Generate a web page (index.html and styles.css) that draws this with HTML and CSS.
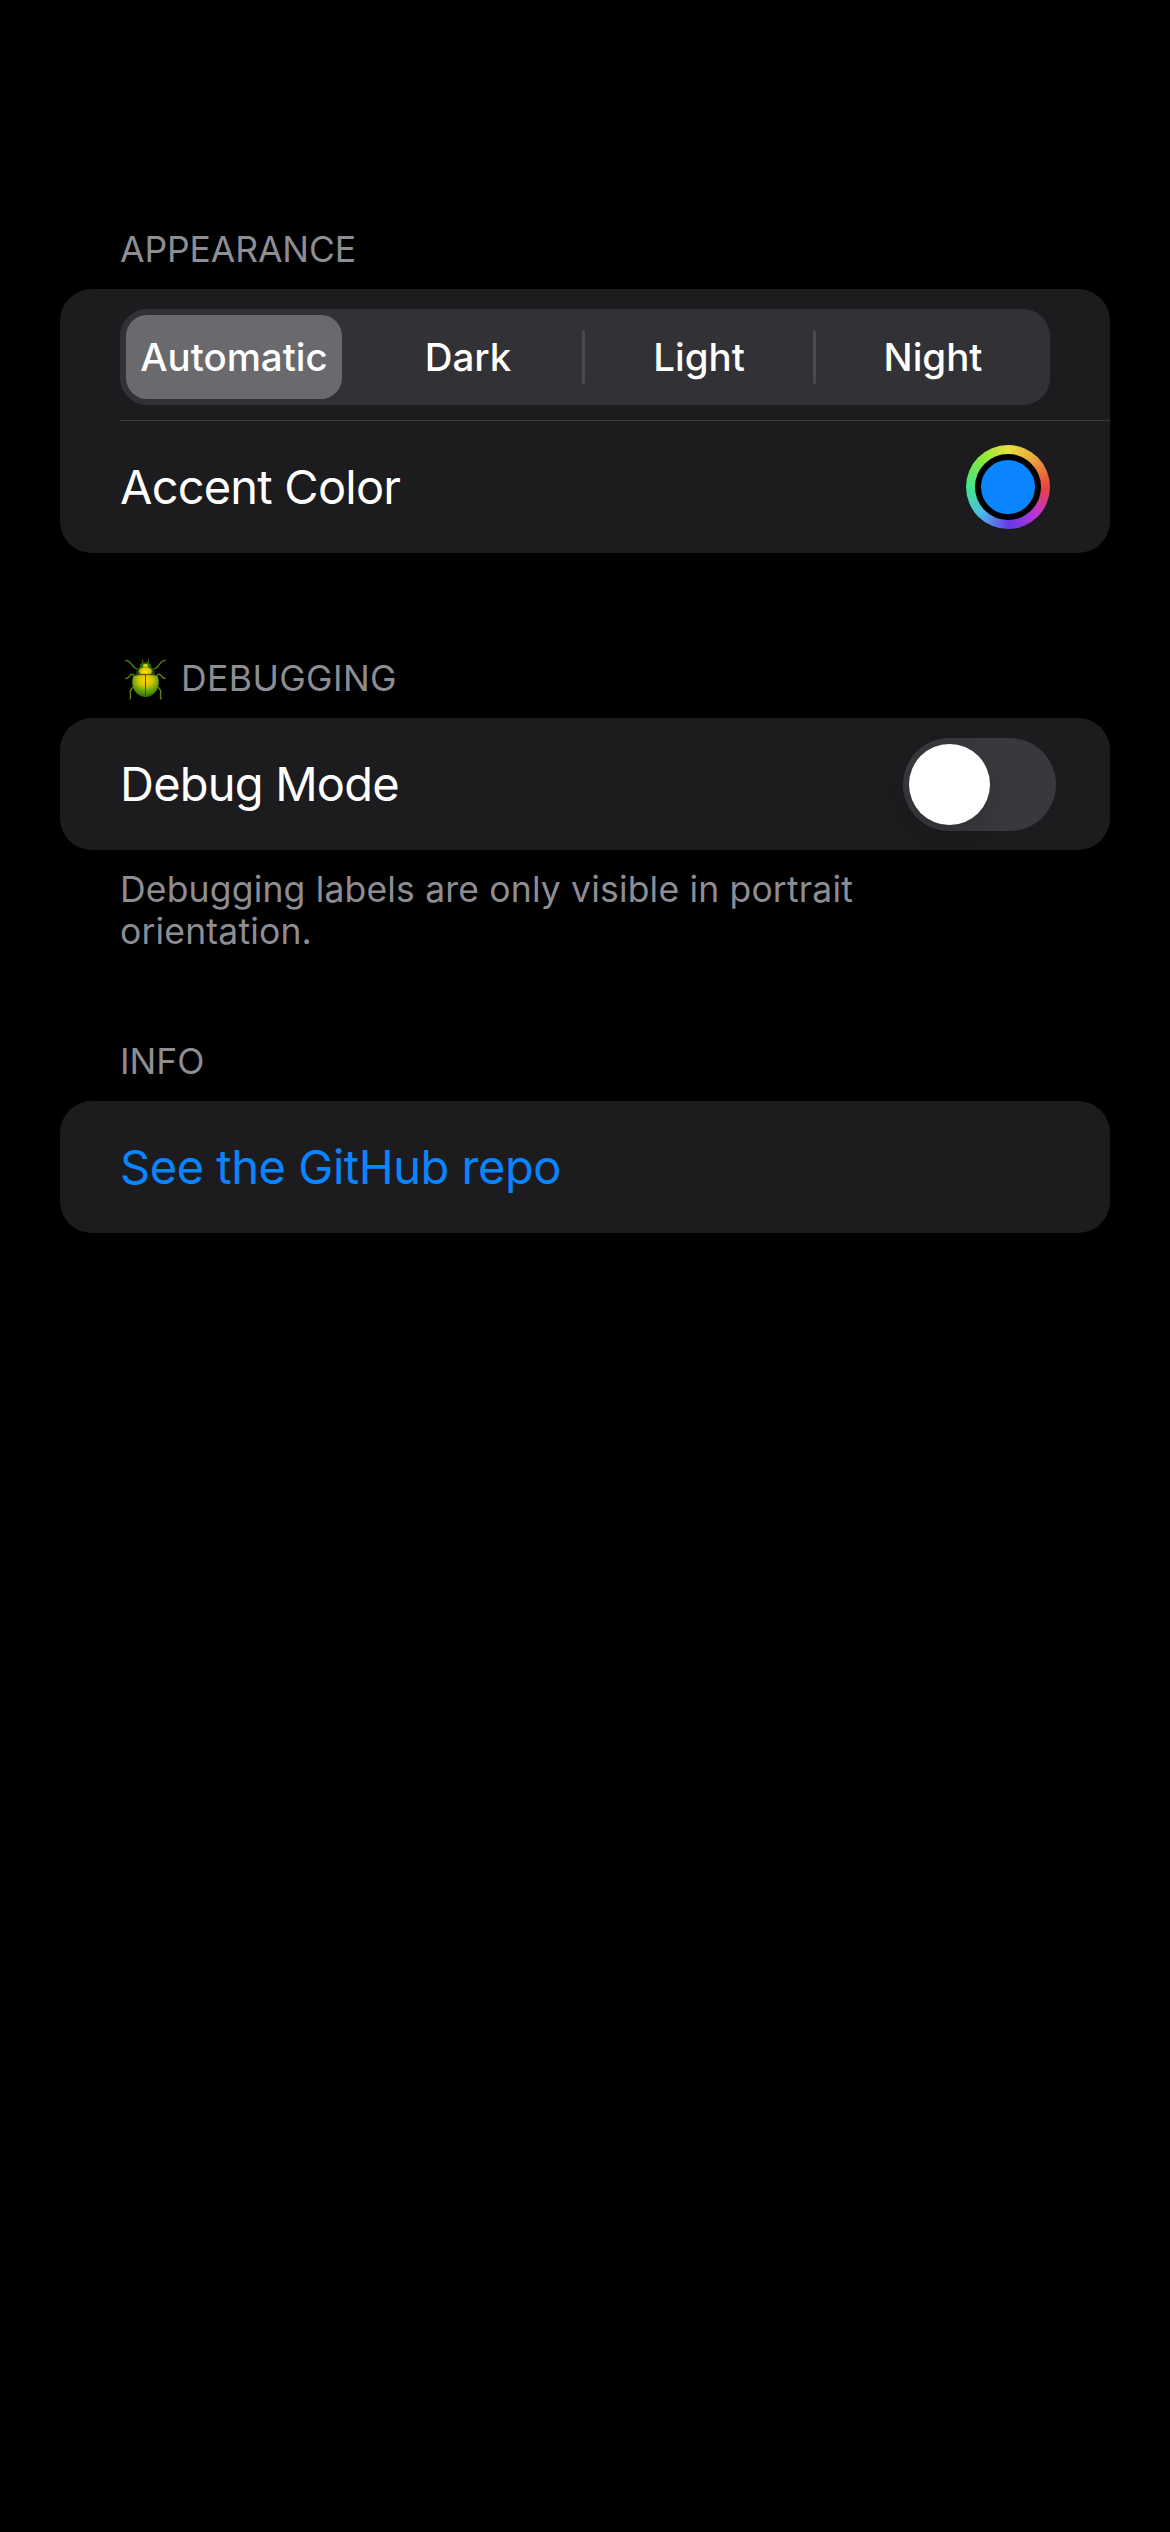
FILE: index.html
```html
<!DOCTYPE html>
<html lang="en">
<head>
<meta charset="utf-8">
<title>Settings</title>
<link rel="stylesheet" href="styles.css">
</head>
<body>
<main class="settings">
  <section class="group">
    <h2 class="group-title"><span class="title-appearance">APPEARANCE</span></h2>
    <div class="card">
      <div class="row row-segments">
        <div class="segments">
          <button class="segment selected">Automatic</button>
          <button class="segment">Dark</button>
          <i class="segment-divider"></i>
          <button class="segment">Light</button>
          <i class="segment-divider"></i>
          <button class="segment last">Night</button>
        </div>
      </div>
      <div class="row">
        <span class="label label-accent">Accent Color</span>
        <button class="color-well" aria-label="Accent Color"><i class="color-well-fill"></i></button>
      </div>
    </div>
  </section>

  <section class="group group-debug">
    <h2 class="group-title">
      <svg class="beetle" viewBox="0 0 41 41" aria-hidden="true">
        <defs>
          <radialGradient id="shell" cx="0.5" cy="0.25" r="0.75">
            <stop offset="0" stop-color="#fbd500"/>
            <stop offset="0.35" stop-color="#d3c408"/>
            <stop offset="0.62" stop-color="#6fa80c"/>
            <stop offset="1" stop-color="#2b6a05"/>
          </radialGradient>
          <radialGradient id="thorax" cx="0.5" cy="0.5" r="0.6">
            <stop offset="0" stop-color="#ffe400"/>
            <stop offset="0.6" stop-color="#dcbc00"/>
            <stop offset="1" stop-color="#2c6205"/>
          </radialGradient>
        </defs>
        <g fill="none" stroke="#5c7e0c" stroke-width="1.4" stroke-linecap="round" stroke-linejoin="round">
          <path d="M1 1.5 4 2.4 9.5 8.7 12 10M40 1.5 37 2.4 31.5 8.7 29 10"/>
          <path d="M.8 19.6 3.5 18.5 6 15.2 8.5 15.8 11 18.5M40.2 19.6 37.5 18.5 35 15.2 32.5 15.8 30 18.5"/>
          <path d="M5 40 5.6 37.5 5.2 32 7.5 28.5M36 40 35.4 37.5 35.8 32 33.5 28.5"/>
          <path d="M18 4 17.4 1M23 4 23.6 1" stroke-width="1"/>
        </g>
        <path fill="#174307" d="M11 14.5C11 9 15 6 20.5 6S30 9 30 14.5L28 17H13Z"/>
        <ellipse cx="20.5" cy="6.5" rx="5.6" ry="3.3" fill="#2f6808"/>
        <ellipse cx="20.5" cy="6.5" rx="2.7" ry="1.6" fill="#e0d900"/>
        <ellipse cx="20.5" cy="12.3" rx="7" ry="4.6" fill="url(#thorax)"/>
        <path fill="url(#shell)" d="M9 16.5C13 15.3 28 15.3 32 16.5 34.5 20 34.3 27 31.5 31.5 28.5 36 24.5 38 20.5 38S12.500 36 9.5 31.5C6.7 27 6.5 20 9 16.5Z"/>
        <path d="M9 16.5C13 15.3 28 15.3 32 16.5M20.5 16V37.5" fill="none" stroke="#544b00" stroke-width="1"/>
      </svg>
      <span class="title-debugging">DEBUGGING</span>
    </h2>
    <div class="card">
      <div class="row">
        <span class="label label-debug">Debug Mode</span>
        <button class="switch" role="switch" aria-checked="false" aria-label="Debug Mode"><i class="knob"></i></button>
      </div>
    </div>
    <p class="group-note">Debugging labels are only visible in portrait<br>orientation.</p>
  </section>

  <section class="group group-info">
    <h2 class="group-title">INFO</h2>
    <div class="card">
      <div class="row">
        <a class="label label-link">See the GitHub repo</a>
      </div>
    </div>
  </section>
</main>
</body>
</html>
```
FILE: styles.css
```css
* {
  box-sizing: border-box;
}

body {
  margin: 0;
  min-height: 2532px;
  background: #000;
  color: #fff;
  font-family: Inter, "Liberation Sans", sans-serif;
}

button {
  margin: 0;
  padding: 0;
  border: 0;
  background: none;
  color: inherit;
  font: inherit;
}

.settings {
  padding: 224px 60px 0;
}

.group-title {
  display: flex;
  align-items: center;
  height: 52px;
  margin: 0 0 13px;
  padding-left: 60px;
  color: #8d8d93;
  font-size: 35.5px;
  font-weight: 400;
  line-height: 52px;
  white-space: nowrap;
}

.title-appearance {
  letter-spacing: -0.1px;
}

.title-debugging {
  letter-spacing: 0.4px;
}

.group-debug {
  padding-top: 100px;
}

.group-info {
  padding-top: 83px;
}

.card {
  border-radius: 32px;
  background: #1c1c1e;
}

.row {
  display: flex;
  align-items: center;
  justify-content: space-between;
  height: 132px;
  padding: 0 60px;
}

.row-segments {
  align-items: flex-start;
  padding-top: 20px;
  background: linear-gradient(#3d3d40, #3d3d40) 60px 131px / 990px 1px no-repeat;
}

.segments {
  display: flex;
  align-items: center;
  width: 930px;
  height: 96px;
  border-radius: 27px;
  background: #323135;
}

.segment {
  flex: 0 0 228px;
  height: 84px;
  font-size: 38.5px;
  font-weight: 450;
  line-height: 84px;
  text-align: center;
}

.segment.selected {
  flex-basis: 216px;
  margin: 0 12px 0 6px;
  border-radius: 21px;
  background: #69696e;
  font-weight: 550;
}

.segment.last {
  flex: 1;
}

.segment-divider {
  width: 3px;
  height: 54px;
  border-radius: 2px;
  background: #4b4a4f;
}

.label {
  font-size: 47px;
  line-height: 60px;
  white-space: nowrap;
}

.label-accent,
.label-debug {
  letter-spacing: -0.79px;
}

.label-link {
  color: #0a84ff;
  letter-spacing: -0.46px;
}

.color-well {
  display: grid;
  place-items: center;
  width: 84px;
  height: 84px;
  border-radius: 50%;
  background: conic-gradient(#e6e13e, #e8a23f 45deg, #ea4340 90deg, #b935d6 135deg, #6838e8 178deg, #4cbbe8 225deg, #42e68b 270deg, #82e93e 315deg, #e6e13e);
}

.color-well-fill {
  width: 66px;
  height: 66px;
  border: 6px solid #000;
  border-radius: 50%;
  background: #0a84ff;
}

.switch {
  display: flex;
  align-items: center;
  width: 153px;
  height: 93px;
  margin-right: -6px;
  padding: 0 6px;
  border-radius: 47px;
  background: #39383d;
}

.knob {
  width: 81px;
  height: 81px;
  border-radius: 50%;
  background: #fff;
  box-shadow: 0 9px 24px rgba(0, 0, 0, 0.15);
}

.beetle {
  width: 41px;
  height: 41px;
  margin: 0 15px 0 5px;
}

.group-note {
  margin: 0;
  padding: 19px 60px 0;
  color: #8d8d93;
  font-size: 35.5px;
  line-height: 42px;
  letter-spacing: 0.175px;
}
```
